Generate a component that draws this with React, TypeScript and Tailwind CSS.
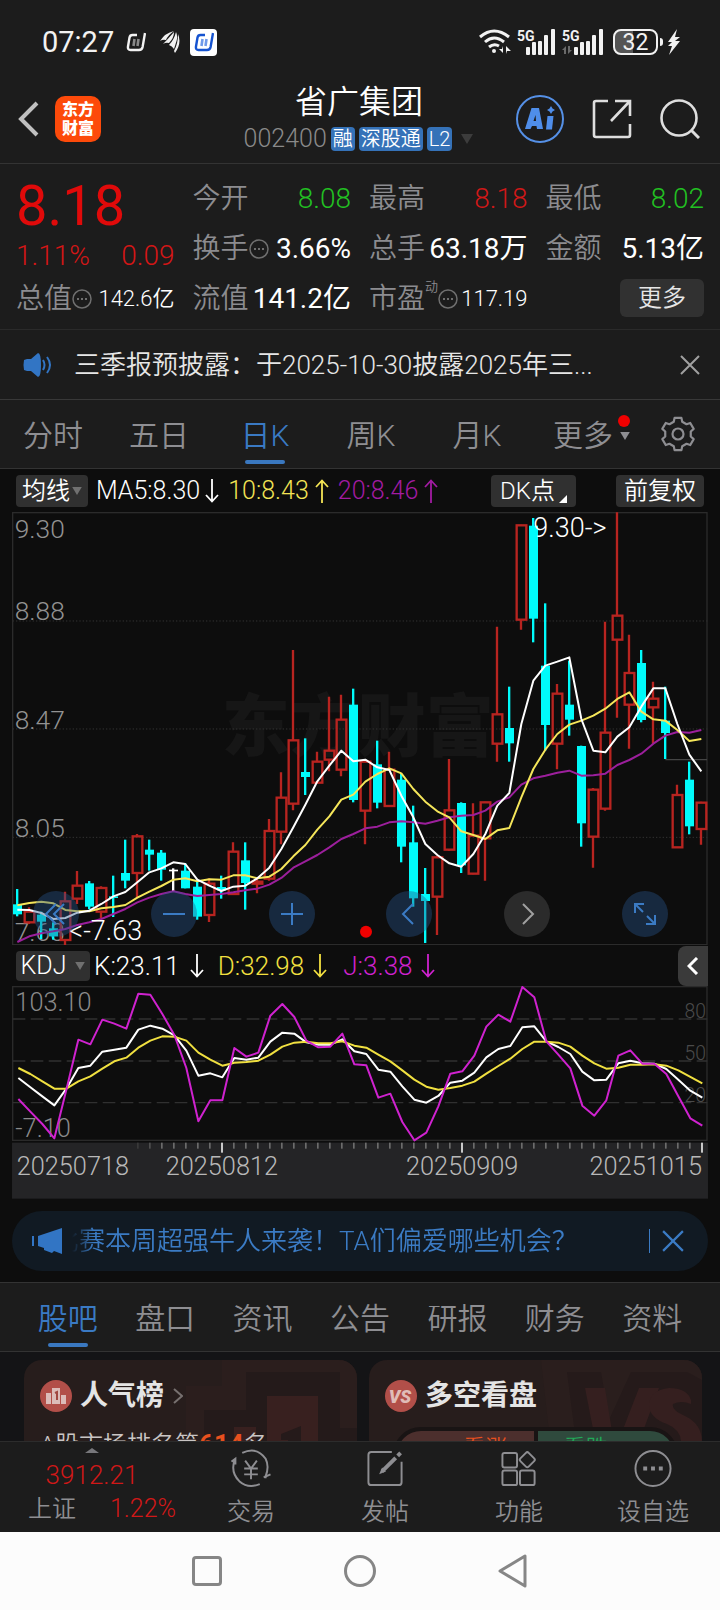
import React from "react";

type Candle = [kind: "u" | "d" | "f", high: number, top: number, bottom: number, low: number];

const CANDLES: Candle[] = [
  ["d", 1150, 1196, 1226, 1232], ["u", 1205, 1218, 1250, 1255], ["d", 1218, 1227, 1248, 1300],
  ["d", 1250, 1268, 1292, 1302], ["u", 1158, 1187, 1303, 1320], ["u", 1096, 1140, 1179, 1195],
  ["d", 1126, 1133, 1203, 1211], ["u", 1142, 1147, 1218, 1238], ["d", 1110, 1172, 1177, 1234],
  ["d", 1002, 1102, 1125, 1148], ["u", 985, 992, 1102, 1176], ["d", 1002, 1032, 1047, 1095],
  ["d", 1033, 1041, 1092, 1125], ["f", 1088, 1092, 1097, 1157], ["d", 1073, 1095, 1148, 1148],
  ["d", 1126, 1143, 1233, 1242], ["u", 1118, 1134, 1228, 1249], ["d", 1110, 1144, 1154, 1179],
  ["u", 1010, 1038, 1165, 1168], ["d", 1010, 1064, 1132, 1212], ["u", 1117, 1128, 1134, 1163],
  ["u", 940, 976, 1119, 1125], ["u", 800, 876, 978, 1016], ["u", 433, 704, 894, 914],
  ["d", 698, 799, 814, 868], ["u", 738, 768, 831, 833], ["u", 573, 735, 762, 797],
  ["u", 567, 642, 792, 812], ["d", 549, 597, 883, 890], ["u", 765, 768, 915, 1016],
  ["d", 705, 776, 891, 908], ["u", 738, 792, 901, 903], ["d", 805, 822, 1023, 1070],
  ["d", 900, 1010, 1178, 1203], ["d", 1087, 1165, 1186, 1312], ["u", 1050, 1055, 1173, 1288],
  ["u", 760, 914, 1032, 1035], ["d", 890, 892, 1079, 1102], ["u", 893, 990, 1104, 1106],
  ["u", 888, 890, 998, 1125], ["u", 363, 626, 714, 768], ["d", 543, 667, 713, 768],
  ["u", 57, 59, 342, 372], ["d", 37, 60, 339, 410], ["d", 293, 480, 658, 735],
  ["u", 535, 564, 714, 791], ["d", 465, 597, 642, 690], ["d", 720, 721, 953, 1023],
  ["u", 847, 852, 993, 1086], ["u", 348, 681, 909, 915], ["u", 20, 330, 402, 636],
  ["u", 387, 502, 597, 729], ["d", 433, 472, 643, 650], ["u", 528, 579, 605, 714],
  ["d", 543, 645, 682, 760], ["u", 837, 868, 1025, 1027], ["d", 768, 822, 962, 986],
  ["u", 888, 891, 970, 1017],
];

const MA5 = [
  1212, 1213, 1222, 1240, 1237, 1221, 1215, 1195, 1172, 1159, 1130, 1100, 1088, 1070, 1075, 1122, 1140, 1156, 1143,
  1140, 1118, 1086, 1030, 965, 897, 827, 780, 735, 767, 762, 785, 793, 870, 935, 1015, 1048, 1073, 1083, 1045, 985,
  900, 862, 655, 525, 480, 468, 455, 640, 735, 740, 693, 665, 603, 548, 548, 655, 747, 797,
];
const MA10 = [
  1199, 1192, 1188, 1193, 1213, 1217, 1217, 1208, 1204, 1198, 1176, 1158, 1141, 1122, 1118, 1127, 1121, 1122, 1109,
  1109, 1118, 1113, 1090, 1052, 1018, 972, 932, 882, 867, 828, 805, 788, 803, 850, 888, 917, 935, 977, 988, 1000,
  974, 967, 875, 790, 732, 685, 657, 645, 630, 609, 580, 560, 618, 641, 645, 673, 706, 700,
];
const MA20 = [
  1309, 1292, 1283, 1277, 1270, 1258, 1250, 1240, 1225, 1210, 1190, 1176, 1165, 1157, 1165, 1171, 1168, 1165, 1160,
  1154, 1149, 1137, 1117, 1086, 1067, 1048, 1025, 1000, 985, 968, 963, 950, 947, 950, 954, 945, 935, 930, 928, 915,
  888, 875, 837, 818, 810, 801, 795, 810, 809, 804, 778, 763, 744, 714, 690, 679, 681, 673,
];
const K = [
  400, 428, 455, 482, 432, 370, 363, 321, 315, 309, 255, 243, 252, 272, 318, 393, 386, 398, 340, 345, 339, 291, 264,
  267, 293, 300, 300, 284, 320, 328, 375, 381, 425, 465, 474, 454, 414, 408, 384, 338, 313, 304, 248, 245, 290, 307,
  328, 381, 407, 405, 356, 348, 356, 357, 373, 405, 438, 459,
];
const D = [
  370, 388, 410, 432, 432, 410, 395, 372, 350, 339, 309, 288, 275, 276, 288, 324, 345, 363, 354, 352, 348, 330, 306,
  294, 291, 296, 296, 290, 303, 309, 330, 350, 377, 405, 426, 435, 430, 423, 411, 387, 364, 342, 313, 291, 291, 294,
  306, 333, 356, 372, 369, 360, 360, 359, 363, 377, 397, 416,
];
const J = [
  463, 501, 538, 581, 435, 285, 299, 225, 237, 252, 147, 150, 208, 271, 370, 530, 467, 467, 310, 336, 324, 213, 178,
  217, 288, 308, 306, 267, 359, 362, 459, 447, 532, 587, 564, 485, 387, 380, 333, 246, 210, 231, 127, 158, 290, 330,
  371, 483, 513, 467, 333, 317, 357, 357, 388, 455, 521, 543,
];

const points = (values: number[], start: number) => values.map((y, i) => `${start + i * 36},${y}`).join(" ");

const GEAR = (() => {
  const at = (r: number, deg: number) => {
    const a = (deg * Math.PI) / 180;
    return `${(18 + r * Math.cos(a)).toFixed(2)} ${(18 + r * Math.sin(a)).toFixed(2)}`;
  };
  const pts: string[] = [];
  for (let k = 0; k < 6; k++) {
    const c = -90 + k * 60;
    pts.push(at(13, c - 19), at(16.5, c - 12), at(16.5, c + 12), at(13, c + 19));
  }
  return `M${pts.join("L")}Z`;
})();

function CandleChart() {
  return (
    <svg viewBox="36 19 2088 1300" className="block h-auto w-full" role="img" aria-label="日K线">
      <text x="1073" y="737" textAnchor="middle" fontSize="204" fontWeight="900" fill="#161616">东方财富</text>
      <g stroke="#333" strokeWidth="3" strokeDasharray="4 6">
        <path d="M38 346H2122M38 670H2122M38 995H2122" />
      </g>
      <rect x="38" y="21" width="2083" height="1296" fill="none" stroke="#2b2b2b" strokeWidth="4" />
      <g fontSize="79" fontWeight="300" fill="#929292">
        <text x="44" y="98">9.30</text>
        <text x="44" y="344">8.88</text>
        <text x="44" y="671">8.47</text>
        <text x="44" y="995">8.05</text>
        <text x="44" y="1306">7.63</text>
      </g>
      <path d="M1996 762H2121" stroke="#444" strokeWidth="4" />
      {CANDLES.map(([kind, high, top, bottom, low], i) => {
        const x = 52 + i * 36;
        if (kind === "u") {
          return (
            <g key={i} stroke="#b82420" strokeWidth="7" fill="none">
              <path d={`M${x - 1} ${high}V${top}M${x - 1} ${bottom}V${low}`} />
              <rect x={x - 14} y={top} width="29" height={bottom - top} />
            </g>
          );
        }
        const color = kind === "d" ? "#00fbfb" : "#fff";
        return (
          <g key={i} fill={color}>
            <rect x={x - 4} y={high} width="7" height={low - high} />
            <rect x={x - 13} y={top} width="27" height={bottom - top} />
          </g>
        );
      })}
      <g fill="none" strokeWidth="6" strokeLinejoin="round">
        <polyline points={points(MA20, 52)} stroke="#9c1f9c" />
        <polyline points={points(MA10, 52)} stroke="#f5e65a" />
        <polyline points={points(MA5, 52)} stroke="#fff" />
      </g>
      <g fontSize="81" fontWeight="350" fill="#fff">
        <text x="1600" y="93">9.30-&gt;</text>
        <text x="208" y="1304">&lt;-7.63</text>
      </g>
      <circle cx="1098" cy="1278" r="18" fill="#f00000" />
    </svg>
  );
}

function KdjChart() {
  return (
    <svg viewBox="36 124 2088 638" className="block h-auto w-full" role="img" aria-label="KDJ">
      <rect x="36" y="594" width="2088" height="168" fill="#242426" />
      <rect x="38" y="126" width="2083" height="461" fill="none" stroke="#2b2b2b" strokeWidth="4" />
      <path d="M38 223H2122M38 349H2122M38 474H2122" stroke="#303030" strokeWidth="4" strokeDasharray="38 16" />
      <g fontSize="76" fontWeight="300" fill="#8a8a8a">
        <text x="46" y="200">103.10</text>
        <text x="46" y="576">-7.10</text>
      </g>
      <g fontSize="58" fontWeight="300" fill="#4a4a4a" textAnchor="end">
        <text x="2118" y="221">80</text>
        <text x="2118" y="347">50</text>
        <text x="2118" y="473">20</text>
      </g>
      <g fill="none" strokeWidth="6" strokeLinejoin="round">
        <polyline points={points(K, 55)} stroke="#fff" />
        <polyline points={points(D, 55)} stroke="#f0e040" />
        <polyline points={points(J, 55)} stroke="#cf22cf" />
      </g>
      {K.map((_, i) => {
        if (i < 10) return null;
        const major = i % 20 === 17;
        const faint = i === 10 ? "#3a3a3a" : i === 11 ? "#505050" : "#6c6c6c";
        return (
          <rect
            key={i}
            x={51 + i * 36}
            y="594"
            width={major ? 6 : 5}
            height={major ? 30 : 18}
            fill={major ? "#c8c8c8" : faint}
          />
        );
      })}
      <g fontSize="76" fontWeight="300" fill="#b8b8b8">
        <text x="50" y="690">20250718</text>
        <text x="497" y="690">20250812</text>
        <text x="1218" y="690">20250909</text>
        <text x="2106" y="690" textAnchor="end">20251015</text>
      </g>
    </svg>
  );
}

function BrandMark({ className, bar }: { className: string; bar: string }) {
  return (
    <svg viewBox="0 0 20 20" className={className} fill="none">
      <path d="M11 3H6.500Q4 3 3.500 5.500L2 14.500Q1.500 18 4.500 18H13Q16 18 16.600 15L19 1" stroke="currentColor" strokeWidth="2.400" />
      <path d="M8.500 7L7.500 14M12.500 7L11.500 14" stroke={bar} strokeWidth="2.600" />
    </svg>
  );
}

const BARS = [[0, 19], [6, 14], [12, 13], [18, 7], [25, 1]];

function Signal({ dim }: { dim?: boolean }) {
  const start = dim ? 12 : 9;
  return (
    <svg viewBox="0 0 42 28" className="h-7 w-[42px]" fill="#f2f2f2">
      <text x="0" y="13" fontSize="14" fontWeight="700">5G</text>
      {BARS.map(([x, y]) => (
        <rect key={x} x={start + x} y={y} width="4" height={27 - y} rx="1" />
      ))}
      {dim && <path d="M4 18v8H2v-4H0zM6 18v8l4-4H8v-4z" fill="#6a6a6a" />}
    </svg>
  );
}

function Arrow({ up }: { up?: boolean }) {
  return (
    <svg viewBox="0 0 16 24" className="h-6 w-4" fill="none" stroke="currentColor" strokeWidth="1.800">
      {up ? <path d="M8 24V1M2 8L8 1.500L14 8" /> : <path d="M8 0V23M2 16L8 22.500L14 16" />}
    </svg>
  );
}

function Down({ className }: { className: string }) {
  return (
    <svg viewBox="0 0 12 10" className={className} fill="currentColor">
      <path d="M0 0H12L6 10Z" />
    </svg>
  );
}

function More() {
  return (
    <svg viewBox="0 0 20 20" className="size-5 shrink-0" fill="none" stroke="#6f6f6f" strokeWidth="1.500">
      <circle cx="10" cy="10" r="9" />
      <path d="M5 10h2M9 10h2M13 10h2" strokeWidth="2" />
    </svg>
  );
}

function Close({ className }: { className: string }) {
  return (
    <svg viewBox="0 0 20 20" className={className} fill="none" stroke="currentColor" strokeWidth="2">
      <path d="M1 1L19 19M19 1L1 19" />
    </svg>
  );
}

function Quote({ label, value, tone = "text-white font-normal", info, sup, small }: {
  label: string; value: string; tone?: string; info?: boolean; sup?: string; small?: boolean;
}) {
  return (
    <div className="flex h-[50px] items-center justify-between">
      <dt className="flex items-center text-[28px] text-[#8c8c90]">
        {label}
        {sup && <sup className="-mt-3 text-[13px]">{sup}</sup>}
        {info && <More />}
      </dt>
      <dd className={small ? "text-[22px] text-white" : `text-[28px] ${tone}`}>{value}</dd>
    </div>
  );
}

const KLINE_TABS = ["分时", "五日", "日K", "周K", "月K", "更多"];
const INFO_TABS = ["股吧", "盘口", "资讯", "公告", "研报", "财务", "资料"];

function ChartButton({ label, muted, children }: { label: string; muted?: boolean; children: React.ReactNode }) {
  return (
    <button
      aria-label={label}
      className={`flex size-[46px] items-center justify-center rounded-full ${
        muted ? "bg-[#2b2b2b] text-[#a0a0a0]" : "bg-[rgba(40,85,140,0.4)] text-[#3b7bc4]"
      }`}
    >
      <svg viewBox="0 0 24 24" className="size-6" fill="none" stroke="currentColor" strokeWidth="2">{children}</svg>
    </button>
  );
}

function NavItem({ label, children }: { label: string; children: React.ReactNode }) {
  return (
    <button className="flex flex-1 flex-col items-center gap-1 pt-[7px] text-2xl leading-10 text-[#8e8e92]">
      <svg viewBox="0 0 40 40" className="size-10" fill="none" stroke="currentColor" strokeWidth="2">{children}</svg>
      {label}
    </button>
  );
}

export default function App() {
  return (
    <div lang="zh-CN" className="flex w-full flex-col bg-[#1c1c1c] leading-none font-[350] [font-family:Roboto,'Noto_Sans_CJK_SC',sans-serif]">
      <div className="flex h-[84px] items-center justify-between pr-10 pl-[42px] text-[#f2f2f2]">
        <div className="flex items-center">
          <span className="text-[29px] font-normal">07:27</span>
          <BrandMark className="ml-3 size-5" bar="#8a8a8a" />
          <svg viewBox="0 0 20 22" className="ml-[14px] h-[22px] w-5" fill="currentColor">
            <path d="M0 10Q5 2 14 0Q8 4 6 9Q3 8 0 10ZM3 13Q8 8 14 1Q14 7 9 12Q6 11 3 13ZM9 14Q14 9 16 1Q18 5 16.500 10L14 18Q12 15 9 14ZM14 20Q18 13 18 3Q22 12 15 22Z" />
          </svg>
          <span className="ml-[10px] flex size-[27px] items-center justify-center rounded bg-white text-[#1553d0]">
            <BrandMark className="size-5" bar="#6f9aea" />
          </span>
        </div>
        <div className="flex items-center">
          <svg viewBox="0 0 32 26" className="mr-[6px] h-[26px] w-8" fill="none" stroke="#f2f2f2" strokeWidth="3">
            <path d="M1 8Q15 -4 30 8M6 13Q15 5 25 13M10 18Q15 14 20 17" />
            <circle cx="15" cy="22" r="2" fill="#f2f2f2" stroke="none" />
            <path d="M24 17v7l-4-4h3zM27 25v-8l5 5h-4z" fill="#f2f2f2" stroke="none" />
          </svg>
          <Signal />
          <span className="w-[3px]" />
          <Signal dim />
          <div className="ml-[9px] flex h-[26px] w-[45px] items-center justify-center rounded-lg border-2 border-[#f2f2f2] bg-linear-to-r from-[#555] from-45% to-transparent to-45% text-[23px] font-normal">
            32
          </div>
          <span className="ml-[2px] h-2 w-[3px] rounded-r bg-[#f2f2f2]" />
          <svg viewBox="0 0 12 28" className="ml-[5px] h-7 w-3" fill="#f2f2f2">
            <path d="M9 1L0 14H4L0 18H4L1 27L12 13H7L12 9H7Z" />
          </svg>
        </div>
      </div>

      <header className="grid h-20 grid-cols-[1fr_auto_1fr] items-center border-b border-[#333] pr-5 pb-[10px] pl-[18px]">
        <div className="flex items-center gap-4">
          <button aria-label="返回">
            <svg viewBox="0 0 21 36" className="h-9 w-[21px]" fill="none" stroke="#c0c0c0" strokeWidth="4">
              <path d="M19 2L3 18L19 34" />
            </svg>
          </button>
          <div className="flex size-[46px] flex-col items-center justify-center rounded-[10px] bg-[#fd4a0a] text-base leading-[19px] font-black text-white">
            <span>东方</span>
            <span>财富</span>
          </div>
        </div>
        <div className="flex flex-col items-center gap-[9px]">
          <h1 className="text-[32px] leading-8 text-white">省广集团</h1>
          <div className="flex items-center gap-1 text-xl leading-6 text-white">
            <span className="text-[25px] text-[#8a8a8a]">002400</span>
            <span className="rounded bg-[#3572b8] px-[2px]">融</span>
            <span className="rounded bg-[#3572b8] px-[2px]">深股通</span>
            <span className="rounded bg-[#3572b8] px-[2px]">L2</span>
            <Down className="ml-1 h-[10px] w-[14px] text-[#3c3c3c]" />
          </div>
        </div>
        <div className="flex items-center justify-end gap-7">
          <button aria-label="AI">
            <svg viewBox="0 0 48 48" className="size-12" fill="none">
              <circle cx="24" cy="24" r="23" stroke="#5590e6" strokeWidth="2" />
              <path d="M15.500 13H23L27 34H21L20.500 31H16L14.500 34H9Z M17.500 26H20L19.500 20Z" fill="#4f8eea" fillRule="evenodd" />
              <path d="M31.500 21H37.500L36 34.500H30Z" fill="#4f8eea" />
              <path d="M35 11L36.500 13.500L39 15L36.500 16.500L35 19L33.500 16.500L31 15L33.500 13.500Z" fill="#4f8eea" />
            </svg>
          </button>
          <button aria-label="分享">
            <svg viewBox="0 0 40 40" className="size-10" fill="none" stroke="#dedede" strokeWidth="2.600">
              <path d="M16 2H4Q2 2 2 4V36Q2 38 4 38H36Q38 38 38 36V25" />
              <path d="M23 2H38V17M37 3L19 22" />
            </svg>
          </button>
          <button aria-label="搜索">
            <svg viewBox="0 0 40 40" className="size-10" fill="none" stroke="#dedede" strokeWidth="2.600">
              <circle cx="19" cy="19" r="17.500" />
              <path d="M31 31L39 39" strokeWidth="3" />
            </svg>
          </button>
        </div>
      </header>

      <section className="grid h-[166px] grid-cols-4 gap-x-[18px] border-b border-[#2a2a2a] px-4 pt-[10px]">
        <div>
          <div className="flex h-[63px] items-center text-[56px] font-normal text-[#e00a0a]">8.18</div>
          <div className="flex h-[37px] items-center justify-between text-[28px] text-[#d41616]">
            <span>1.11%</span>
            <span>0.09</span>
          </div>
          <dl><Quote label="总值" value="142.6亿" info small /></dl>
        </div>
        <dl>
          <Quote label="今开" value="8.08" tone="text-[#22c022]" />
          <Quote label="换手" value="3.66%" info />
          <Quote label="流值" value="141.2亿" />
        </dl>
        <dl>
          <Quote label="最高" value="8.18" tone="text-[#d01818]" />
          <Quote label="总手" value="63.18万" />
          <Quote label="市盈" value="117.19" sup="动" info small />
        </dl>
        <div>
          <dl>
            <Quote label="最低" value="8.02" tone="text-[#22c022]" />
            <Quote label="金额" value="5.13亿" />
          </dl>
          <div className="flex h-12 items-center justify-end">
            <button className="h-[38px] w-[84px] rounded-md bg-[#313131] text-2xl text-[#e6e6e6]">更多</button>
          </div>
        </div>
      </section>

      <section className="flex h-[70px] items-center border-b border-[#383838] pr-5 pl-[23px]">
        <svg viewBox="0 0 30 26" className="h-[26px] w-[30px]" fill="#3275c4">
          <path d="M1 8Q0 13 1 18L4 19H8L15 25Q18 25 18 13Q18 1 15 1L8 7H4Z" />
          <path d="M20 8Q23 13 20 18M24 5Q30 13 24 21" fill="none" stroke="#3275c4" strokeWidth="2" />
        </svg>
        <a href="#notice" className="ml-[21px] flex-1 text-[26px] text-[#e6e6e6]">三季报预披露：于2025-10-30披露2025年三...</a>
        <button aria-label="关闭" className="text-[#a0a0a0]"><Close className="size-5" /></button>
      </section>

      <nav className="flex h-[69px] border-b border-[#333] text-[30px] text-[#8e8e92]">
        {KLINE_TABS.map((t) => (
          <button key={t} className={`relative flex flex-1 items-center justify-center pt-1 ${t === "日K" ? "text-[#3a7ac4]" : ""}`}>
            {t}
            {t === "日K" && <span className="absolute bottom-1 h-1 w-10 rounded-full bg-[#3a78c0]" />}
            {t === "更多" && (
              <>
                <Down className="absolute right-[6px] h-2 w-[10px]" />
                <span className="absolute top-[15px] right-[6px] size-3 rounded-full bg-[#f00000]" />
              </>
            )}
          </button>
        ))}
        <button aria-label="设置" className="flex w-[84px] items-center justify-center">
          <svg viewBox="0 0 36 36" className="size-9" fill="none" stroke="currentColor" strokeWidth="2.200" strokeLinejoin="round">
            <path d={GEAR} />
            <circle cx="18" cy="18" r="5.500" />
          </svg>
        </button>
      </nav>

      <main className="bg-[#0d0d0d] px-3">
        <div className="flex h-[43px] items-center pr-1 pl-1 text-[25px] text-white">
          <button className="flex h-8 w-[72px] items-center justify-center rounded bg-[#303030] text-2xl">
            均线<Down className="ml-[2px] h-2 w-[10px] text-[#707070]" />
          </button>
          <span className="ml-2 flex items-center gap-1">MA5:8.30<Arrow /></span>
          <span className="ml-2 flex items-center gap-[5px] text-[#f3e455]">10:8.43<Arrow up /></span>
          <span className="ml-2 flex items-center gap-[5px] text-[#a21ba2]">20:8.46<Arrow up /></span>
          <button className="mr-10 ml-auto flex h-8 w-[85px] items-center justify-center gap-1 rounded bg-[#303030] text-2xl">
            DK点
            <svg viewBox="0 0 8 8" className="mt-4 size-2" fill="#fff"><path d="M8 0V8H0Z" /></svg>
          </button>
          <button className="h-8 w-[88px] rounded bg-[#303030] text-2xl">前复权</button>
        </div>

        <div className="relative">
          <CandleChart />
          <div className="absolute right-10 bottom-2 left-[21px] flex justify-between">
            <ChartButton label="最早"><path d="M12 2L2 12L12 22M20 2L10 12L20 22" /></ChartButton>
            <ChartButton label="缩小"><path d="M1 12H23" /></ChartButton>
            <ChartButton label="放大"><path d="M1 12H23M12 1V23" /></ChartButton>
            <ChartButton label="向左"><path d="M16 2L6 12L16 22" /></ChartButton>
            <ChartButton label="向右" muted><path d="M8 2L18 12L8 22" /></ChartButton>
            <ChartButton label="全屏"><path d="M2 11V2H11M2 2L10 10M22 13V22H13M22 22L14 14" /></ChartButton>
          </div>
        </div>

        <div className="flex h-[41px] items-center pl-1 text-[26px] text-white">
          <button className="flex h-[30px] w-[74px] items-center justify-center rounded bg-[#303030] text-[25px]">
            KDJ<Down className="ml-[9px] h-2 w-[10px] text-[#707070]" />
          </button>
          <span className="ml-1 flex items-center gap-[9px]">K:23.11<Arrow /></span>
          <span className="ml-[13px] flex items-center gap-2 text-[#f3e040]">D:32.98<Arrow /></span>
          <span className="ml-[15px] flex items-center gap-2 text-[#cf22cf]">J:3.38<Arrow /></span>
          <button aria-label="展开" className="ml-auto flex h-10 w-[30px] items-center justify-center rounded-l-lg bg-[#3a3a3a]">
            <svg viewBox="0 0 12 18" className="h-[18px] w-3" fill="none" stroke="#fff" strokeWidth="3"><path d="M10 1L2 9L10 17" /></svg>
          </button>
        </div>

        <KdjChart />

        <div className="mt-3 mb-[11px] flex h-[60px] items-center rounded-full bg-[#111a23] pr-6 pl-5 text-[26px] text-[#3b7bc4]">
          <svg viewBox="0 0 30 26" className="h-[26px] w-[30px] shrink-0" fill="#3275c4">
            <path d="M0 8H2V18H0ZM6 8L30 0V26L22 23L20 25L12 22V20L6 18Z" />
          </svg>
          <p className="ml-[10px] flex-1 overflow-hidden leading-9 whitespace-nowrap [mask-image:linear-gradient(to_right,transparent,#000_22px)]">
            <span className="-ml-[19px]">比赛本周超强牛人来袭！TA们偏爱哪些机会？</span>
          </p>
          <span className="mr-3 h-6 w-px bg-[#3b7bc4]" />
          <button aria-label="关闭公告"><Close className="size-[22px]" /></button>
        </div>
      </main>

      <nav className="flex h-[70px] border-y border-[#333] px-[19px] text-[30px] text-[#8e8e92]">
        {INFO_TABS.map((t, i) => (
          <button key={t} className={`relative flex flex-1 items-center justify-center pt-1 ${i === 0 ? "text-[#3a7ac4]" : ""}`}>
            {t}
            {i === 0 && <span className="absolute bottom-1 h-1 w-10 rounded-full bg-[#3a78c0]" />}
          </button>
        ))}
      </nav>

      <section className="grid h-[89px] grid-cols-2 gap-3 overflow-hidden bg-[#141416] pt-2 pr-[18px] pl-6">
        <article className="relative h-36 overflow-hidden rounded-[18px] bg-[#271d1c] px-4 pt-5">
          <svg viewBox="0 0 333 144" className="absolute inset-0 h-36 w-full">
            <path d="M162 26H198V0H333V144H162Z" fill="#2b1e1d" />
            <path d="M180 50H222V12H316V68H333V144H180Z" fill="#241a1a" />
            <path d="M243 36H294V144H243ZM210 67H232V144H210Z" fill="#38201f" />
            <path d="M257 74L277 66V144H264V80H257Z" fill="#251a1a" />
          </svg>
          <h2 className="relative flex items-center text-[28px] leading-8 font-bold text-[#e4e4e4]">
            <svg viewBox="0 0 32 32" className="mr-2 size-8">
              <circle cx="16" cy="16" r="16" fill="#b24f49" />
              <path d="M6 13H11V24H6ZM12 8H20V24H12ZM21 15H26V24H21Z" fill="#dcbcb9" />
              <path d="M15 13L17 12V20" fill="none" stroke="#a14740" strokeWidth="2" />
            </svg>
            人气榜
            <svg viewBox="0 0 10 16" className="ml-[9px] h-4 w-[10px]" fill="none" stroke="#77706f" strokeWidth="2"><path d="M1 1L9 8L1 15" /></svg>
          </h2>
          <p className="relative mt-[18px] text-2xl leading-7 text-[#c9c5c4]">
            A股市场排名第<strong className="text-[26px] font-bold text-[#e8501e]">614</strong>名
          </p>
        </article>
        <article className="relative h-36 overflow-hidden rounded-[18px] bg-[#271d1c] px-4 pt-5">
          <svg viewBox="0 0 333 144" className="absolute inset-0 h-36 w-full">
            <path d="M172 0H333V144H188Z" fill="#2a1e1d" />
            <path d="M198 12H232L240 60L262 12H318L333 20V144H215Z" fill="#251a1a" />
            <path d="M216 28H236L246 90L270 28H290L256 120H234Z" fill="#351f1f" />
            <path d="M322 40Q318 28 300 28Q280 30 280 46Q281 58 298 64Q312 70 312 82H333Q333 64 316 56Q302 50 304 44Q312 40 322 44Z" fill="#351f1f" />
          </svg>
          <h2 className="relative flex items-center text-[28px] leading-8 font-bold text-[#e4e4e4]">
            <svg viewBox="0 0 32 32" className="mr-2 size-8">
              <circle cx="16" cy="16" r="16" fill="#b24f49" />
              <text x="15" y="23" textAnchor="middle" fontSize="18" fontWeight="900" fontStyle="italic" fill="#e0bcb8">VS</text>
            </svg>
            多空看盘
          </h2>
          <div className="relative mx-2 mt-[15px] flex h-14 gap-1 overflow-hidden rounded-full border-4 border-[#191414] bg-[#191414] text-[22px] leading-[34px]">
            <span className="flex-1 bg-[#4c2f2d] pl-10 text-center text-[#e8501e]">看涨</span>
            <span className="flex-1 bg-[#2f4a3d] pr-10 text-center text-[#22a858]">看跌</span>
          </div>
        </article>
      </section>

      <footer className="flex h-[91px] border-t border-[#2c2c2c]">
        <button className="flex w-[184px] flex-col items-center pt-[6px]">
          <svg viewBox="0 0 14 5" className="h-[5px] w-[14px]" fill="#77777b"><path d="M0 5L7 0L14 5Z" /></svg>
          <span className="mt-1 text-[26px] leading-9 text-[#d01818]">3912.21</span>
          <span className="flex w-full justify-between pr-2 pl-7 text-[25px] leading-8">
            <span className="text-2xl leading-8 text-[#8e8e92]">上证</span>
            <span className="text-[#d01818]">1.22%</span>
          </span>
        </button>
        <NavItem label="交易">
          <path d="M11 4Q26 -3 35 10Q39 18 35 28M29 36Q17 41 8 33Q-1 24 3 12M0 13L4 10V16M33 29L40 26M35 27V30" />
          <path d="M14 12L20 20L26 12M20 20V31M13 20H27M13 26H27" />
        </NavItem>
        <NavItem label="发帖">
          <path d="M27 3H6Q3 3 3 6V34Q3 37 6 37H34Q37 37 37 34V13" />
          <path d="M17 23L31 9" strokeWidth="4" />
          <path d="M17 19L14 26L21 23Z" fill="currentColor" stroke="none" />
          <path d="M33 7L36 4" strokeWidth="4" />
        </NavItem>
        <NavItem label="功能">
          <rect x="3" y="4" width="15" height="15" rx="2" />
          <rect x="3" y="22" width="15" height="15" rx="2" />
          <rect x="21" y="22" width="15" height="15" rx="2" />
          <rect x="22.500" y="5" width="12" height="12" rx="2" transform="rotate(45 28.500 11)" />
        </NavItem>
        <NavItem label="设自选">
          <circle cx="20" cy="20" r="18" />
          <path d="M10 20h4M18 20h4M26 20h4" strokeWidth="4" />
        </NavItem>
      </footer>

      <div className="flex h-[78px] items-center justify-center gap-[122px] bg-[#fcfcfc]">
        <button aria-label="最近任务" className="size-[30px] rounded-sm border-3 border-[#868686]" />
        <button aria-label="主屏幕" className="size-8 rounded-full border-3 border-[#868686]" />
        <button aria-label="后退">
          <svg viewBox="0 0 30 34" className="h-[34px] w-[30px]" fill="none" stroke="#868686" strokeWidth="3" strokeLinejoin="round">
            <path d="M27 2V32L2 17Z" />
          </svg>
        </button>
      </div>
    </div>
  );
}
